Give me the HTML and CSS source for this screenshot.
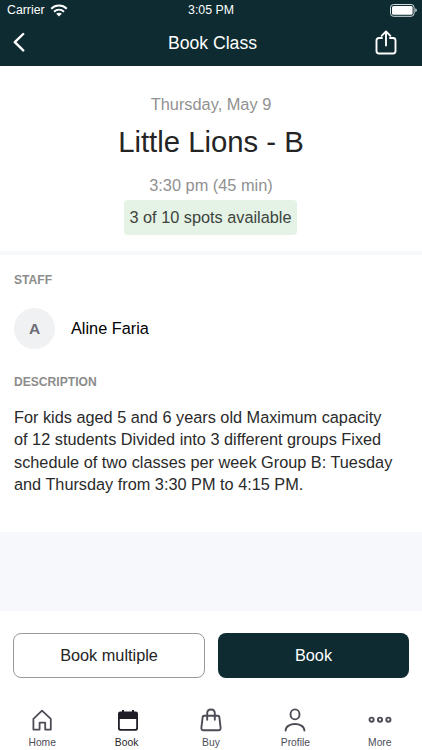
FILE: index.html
```html
<!DOCTYPE html>
<html lang="en">
<head>
<meta charset="utf-8">
<title>Book Class</title>
<link rel="stylesheet" href="styles.css">
</head>
<body>
<div class="app">
  <header class="header">
    <div class="status">
      <div class="carrier"><span>Carrier</span>
        <svg width="18" height="13" viewBox="0 0 18 13" fill="none" stroke="#fff" stroke-width="2"><path d="M1.2 4.7C5.6.5 12.4.5 16.8 4.7M4 7.7c2.9-2.6 7.1-2.6 10 0"/><path d="M6.2 9.8c1.6-1.3 4-1.3 5.6 0L9 12.6z" fill="#fff" stroke="none"/></svg>
      </div>
      <span class="time">3:05 PM</span>
      <svg class="battery" width="28" height="13" viewBox="0 0 28 13"><rect x=".5" y=".5" width="23.6" height="11.8" rx="3" fill="none" stroke="#d5dddf"/><rect x="2" y="2" width="20.6" height="8.8" rx="1.5" fill="#fff"/><path d="M25.3 4.3c2 .7 2 3.3 0 4z" fill="#d5dddf"/></svg>
    </div>
    <div class="navbar">
      <svg class="back" width="14" height="20" viewBox="0 0 14 20" fill="none" stroke="#fff" stroke-width="2.4" stroke-linecap="round" stroke-linejoin="round"><path d="M11.2 2 2.8 10.2 11.2 18.4"/></svg>
      <h1 class="title">Book Class</h1>
      <svg class="share" width="22" height="25" viewBox="0 0 22 25" fill="none" stroke="#fff" stroke-width="1.9" stroke-linecap="round" stroke-linejoin="round"><path d="M7 8H4Q1.5 8 1.5 10.5V21Q1.5 23.5 4 23.5H18Q20.5 23.5 20.5 21V10.5Q20.5 8 18 8H15M11 15.5V1.5M6.6 5.8 11 1.4 15.4 5.8"/></svg>
    </div>
  </header>
  <section class="summary">
    <p class="date">Thursday, May 9</p>
    <h2 class="name">Little Lions - B</h2>
    <p class="hours">3:30 pm (45 min)</p>
    <span class="spots">3 of 10 spots available</span>
  </section>
  <section class="details">
    <h3 class="label">STAFF</h3>
    <div class="person"><span class="avatar">A</span><span class="person-name">Aline Faria</span></div>
    <h3 class="label">DESCRIPTION</h3>
    <p class="description">For kids aged 5 and 6 years old Maximum capacity<br>of 12 students Divided into 3 different groups Fixed<br>schedule of two classes per week Group B: Tuesday<br>and Thursday from 3:30 PM to 4:15 PM.</p>
  </section>
  <div class="actions">
    <button class="button outline">Book multiple</button>
    <button class="button filled">Book</button>
  </div>
  <nav class="tabs">
    <a class="tab"><svg width="24" height="24" viewBox="0 0 24 24" fill="none" stroke="#4c4c57" stroke-width="1.8" stroke-linejoin="round"><path d="M3.4 10.8 12 2.6 20.8 10.8V21.6H15.2V14.6H9.6V21.6H3.4z"/></svg><span>Home</span></a>
    <a class="tab active"><svg width="24" height="24" viewBox="0 0 24 24"><path d="M5.2 3.4H20.8Q23 3.4 23 5.6V20.6Q23 22.8 20.8 22.8H5.2Q3 22.8 3 20.6V5.6Q3 3.4 5.2 3.4z" fill="#1f1e26"/><path d="M4.8 11H21.2V20Q21.2 21 20.2 21H5.8Q4.8 21 4.8 20z" fill="#fff"/><path d="M8 2V5M18 2V5" stroke="#1f1e26" stroke-width="2"/></svg><span>Book</span></a>
    <a class="tab"><svg width="24" height="24" viewBox="0 0 24 24" fill="none" stroke="#4c4c57" stroke-width="1.9" stroke-linecap="round" stroke-linejoin="round"><path d="M5 7.8H19Q20.1 7.8 20.3 8.8L21.6 19.6Q21.9 22.2 19.4 22.2H4.6Q2.1 22.2 2.4 19.6L3.7 8.8Q3.9 7.8 5 7.8zM8.2 11.8V5.2C8.2 .2 15.8 .2 15.8 5.2V11.8"/></svg><span>Buy</span></a>
    <a class="tab"><svg width="24" height="24" viewBox="0 0 24 24" fill="none" stroke="#4c4c57" stroke-width="1.9" stroke-linecap="round"><ellipse cx="12" cy="6.4" rx="4.5" ry="5"/><path d="M2.6 22.5C3 13.9 21 13.9 21.4 22.5"/></svg><span>Profile</span></a>
    <a class="tab"><svg width="24" height="24" viewBox="0 0 24 24" fill="none" stroke="#4c4c57" stroke-width="1.9"><circle cx="3.6" cy="11.7" r="2.1"/><circle cx="12" cy="11.7" r="2.1"/><circle cx="20.4" cy="11.7" r="2.1"/></svg><span>More</span></a>
  </nav>
</div>
</body>
</html>
```
FILE: styles.css
```css
* { box-sizing: border-box; }
body, h1, h2, h3, p { margin: 0; }
body { background: #f7f8fb; font-family: "Liberation Sans", Arial, sans-serif; }
svg { display: block; flex: none; }
.app { width: 422px; height: 750px; display: flex; flex-direction: column; overflow: hidden; }
.header { height: 66px; flex: none; background: #0d2b30; color: #fff; }
.status { height: 20px; padding: 0 5px 0 7px; display: grid; grid-template-columns: 1fr auto 1fr; align-items: center; font-size: 12.3px; line-height: 19px; }
.carrier { display: flex; align-items: center; gap: 5px; }
.time { margin-left: -2px; }
.battery { justify-self: end; margin-right: -1px; }
.navbar { height: 46px; padding: 0 25px 0 12px; display: grid; grid-template-columns: 1fr auto 1fr; align-items: center; }
.back { margin-top: -2px; }
.title { font-size: 17.6px; font-weight: 400; line-height: 46px; margin-left: 16px; margin-top: -1px; }
.share { justify-self: end; margin-top: -1px; }
.summary { height: 185px; padding-top: 28px; background: #fff; text-align: center; flex: none; }
.date, .hours { font-size: 16.35px; line-height: 20px; color: #919191; }
.name { margin: 9px 0 14px; font-size: 29.3px; line-height: 38px; font-weight: 400; color: #242424; }
.spots { display: block; width: 173px; height: 35px; margin: 5px auto 0 124px; border-radius: 4px; background: #e4f3e5; color: #3d433e; font-size: 16.3px; line-height: 35px; }
.details { height: 277px; margin-top: 4px; padding: 18px 14px 0; background: #fff; flex: none; }
.label { font-size: 12.1px; line-height: 14px; color: #8c8c8c; }
.person { display: flex; align-items: center; gap: 16px; margin: 21px 0 26px; }
.avatar { width: 41px; height: 41px; border-radius: 50%; background: #f0f1f3; color: #6c6c75; font-size: 15.5px; font-weight: 700; line-height: 41px; text-align: center; }
.person-name { font-size: 16.3px; color: #000; }
.description { margin-top: 17px; color: #2a2a2a; font-size: 16.3px; line-height: 22.4px; white-space: nowrap; }
.actions { height: 90px; margin-top: 79px; padding: 22px 13px 0; display: grid; grid-template-columns: 192px 191px; gap: 13px; background: #fff; flex: none; }
.button { height: 45px; padding: 0; border-radius: 8px; font-family: inherit; font-size: 16.3px; }
.outline { background: #fff; border: 1px solid #999; color: #242424; }
.filled { background: #0d2b30; border: 0; color: #fff; }
.tabs { flex: 1; display: grid; grid-template-columns: repeat(5, 1fr); background: #fff; }
.tab { display: flex; flex-direction: column; align-items: center; padding-top: 7px; gap: 4px; font-size: 10.3px; line-height: 14px; color: #4c4c57; }
.active { color: #1f1e26; }
```
